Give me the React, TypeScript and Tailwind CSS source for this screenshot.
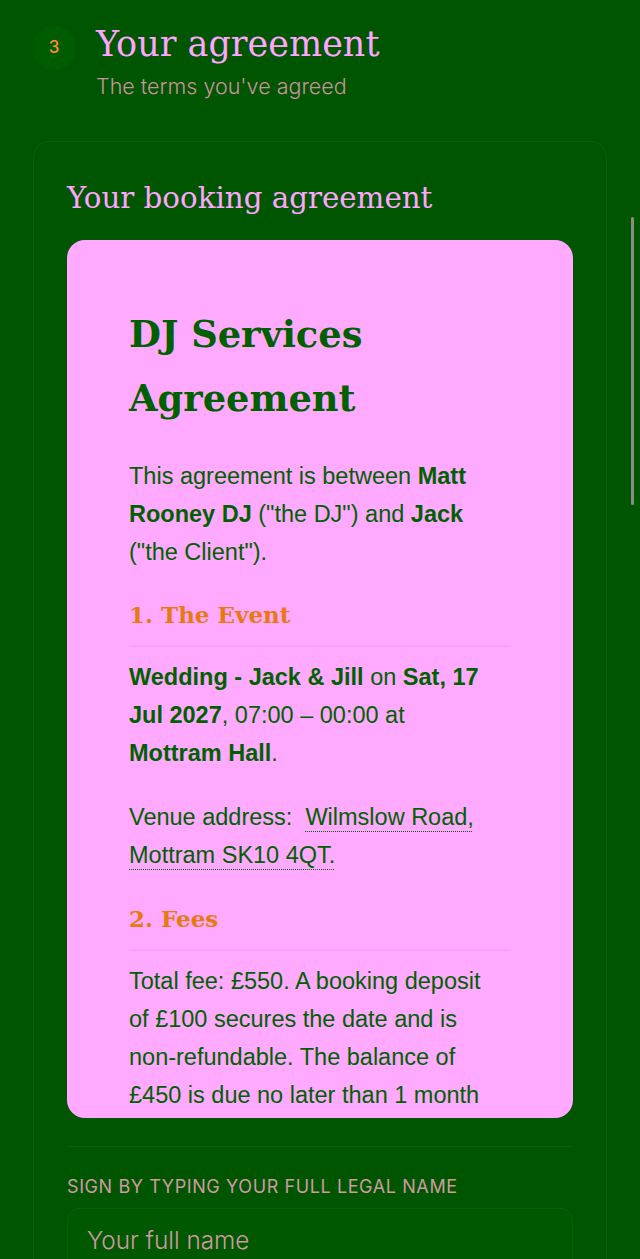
import React from 'react';

const serif = { fontFamily: '"DejaVu Serif", "Liberation Serif", serif' };
const sans = { fontFamily: '"Liberation Sans", Arial, sans-serif' };
const thin = { fontFamily: 'Inter, "Open Sans", sans-serif' };

const SectionHeading: React.FC<{ children: React.ReactNode }> = ({ children }) => (
  <h2
    className="text-[23px] leading-[36px] font-bold text-[#e8790f] border-b-2 border-[#ff9cff] pb-[12px] mb-[11px]"
    style={serif}
  >
    {children}
  </h2>
);

export default function App() {
  return (
    <div className="relative min-h-[1259px] bg-[#005500] overflow-hidden">
      {/* Step header */}
      <div className="flex items-start pl-[32px] pt-[26px]">
        <div
          className="w-[44px] h-[44px] rounded-full bg-[#005c00] flex items-center justify-center text-[17px] text-[#ff8c2e] font-medium"
          style={thin}
        >
          3
        </div>
        <div className="ml-[20px]">
          <h1 className="text-[35px] leading-[40px] text-[#ffa6ff] -mt-[2px]" style={serif}>
            Your agreement
          </h1>
          <p className="text-[21.5px] leading-[28px] mt-[8px] font-light text-[#c9939d]" style={thin}>
            The terms you've agreed
          </p>
        </div>
      </div>

      {/* Panel */}
      <div className="mx-[33px] mt-[41px] border border-[#0a5f0a] rounded-[16px] px-[33px] pt-[34px] pb-[40px]">
        <h2 className="text-[29.3px] leading-[44px] text-[#ffa6ff]" style={serif}>
          Your booking agreement
        </h2>

        <div
          className="mt-[20px] h-[878px] overflow-hidden rounded-[18px] bg-[#ffaaff] px-[62px] pt-[62px] text-[#006000]"
          style={sans}
        >
          <h1 className="text-[36.8px] leading-[64px] font-bold" style={serif}>
            DJ Services Agreement
          </h1>
          <div className="max-w-[362px]">
            <p className="mt-[27px] text-[23.5px] leading-[38px]">
              This agreement is between <b>Matt Rooney DJ</b> ("the DJ") and <b>Jack</b> ("the Client").
            </p>
          </div>

          <div className="mt-[26px]">
            <SectionHeading>1. The Event</SectionHeading>
            <div className="max-w-[362px]">
              <p className="text-[23.5px] leading-[38px]">
                <b>Wedding - Jack &amp; Jill</b> on <b>Sat, 17 Jul 2027</b>, 07:00 – 00:00 at <b>Mottram Hall</b>.
              </p>
              <p className="mt-[26px] text-[23.5px] leading-[38px]">
                Venue address:&nbsp;{' '}
                <span className="underline decoration-dotted decoration-1 underline-offset-[6px]">
                  Wilmslow Road, Mottram SK10 4QT.
                </span>
              </p>
            </div>
          </div>

          <div className="mt-[27px]">
            <SectionHeading>2. Fees</SectionHeading>
            <div className="max-w-[362px]">
              <p className="text-[23.5px] leading-[38px]">
                Total fee: £550. A booking deposit of £100 secures the date and is non-refundable. The balance of £450 is
                due no later than 1 month before the event. Payment can be made by bank transfer.
              </p>
            </div>
          </div>
        </div>

        <div className="mt-[28px] h-px bg-[#0b600b]" />

        <label
          className="block mt-[29px] text-[18px] leading-[22px] tracking-[0.6px] uppercase text-[#cf9aa2]"
          style={thin}
        >
          Sign by typing your full legal name
        </label>
        <div className="mt-[10px] h-[64px] rounded-[12px] border border-[#0a5f0a] bg-[#005800] px-[19px] flex items-center">
          <span className="text-[24.3px] font-light text-[#cf9aa2]" style={thin}>
            Your full name
          </span>
        </div>
      </div>

      {/* overlay scrollbar */}
      <div className="absolute right-[6px] top-[217px] w-[3px] h-[288px] rounded-full bg-[#8a8a8a]" />
    </div>
  );
}
